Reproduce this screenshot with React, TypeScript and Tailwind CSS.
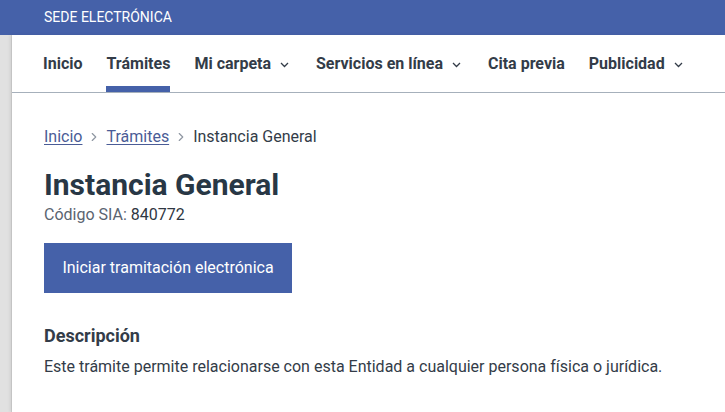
import { ChevronRight } from "lucide-react";

const font = { fontFamily: "Roboto, 'Liberation Sans', sans-serif" };

function Caret() {
  return (
    <svg width="9" height="6" viewBox="0 0 9 6" className="ml-[9px] mr-[3px] mt-[2px]" fill="none">
      <path d="M1 1l3.5 3.5L8 1" stroke="#333c48" strokeWidth="1.3" />
    </svg>
  );
}

type NavItem = { label: string; menu?: boolean; active?: boolean };

const nav: NavItem[] = [
  { label: "Inicio" },
  { label: "Trámites", active: true },
  { label: "Mi carpeta", menu: true },
  { label: "Servicios en línea", menu: true },
  { label: "Cita previa" },
  { label: "Publicidad", menu: true },
];

export default function App() {
  return (
    <div className="w-[725px] h-[412px] overflow-hidden flex flex-col bg-white" style={font}>
      <header className="h-[35px] shrink-0 bg-[#4561a9] flex items-center pl-[44px] text-[14px] text-white">
        SEDE ELECTRÓNICA
      </header>
      <div className="flex flex-1">
        <div className="w-[12px] shrink-0 bg-[#e1e1e1] border-r border-[#d2d2d2]" />
        <main className="flex-1 flex flex-col shadow-[-2px_0_3px_rgba(0,0,0,0.08)]">
          <nav className="h-[58px] border-b border-[#a6b0bb] flex items-center gap-[24px] pl-[31px]">
            {nav.map((item) => (
              <div
                key={item.label}
                className="relative h-full flex items-center text-[16px] font-bold text-[#333c48]"
              >
                {item.label}
                {item.menu && <Caret />}
                {item.active && (
                  <span className="absolute left-0 right-0 bottom-0 h-[6px] bg-[#4561a9]" />
                )}
              </div>
            ))}
          </nav>
          <div className="pl-[32px] pt-[34px]">
            <div className="flex items-center text-[16px] leading-[20px] text-[#333c48]">
              <a className="text-[#4a5c96] underline underline-offset-[2px]">Inicio</a>
              <ChevronRight size={14} strokeWidth={2} className="mx-[5px] text-[#8f97a2]" />
              <a className="text-[#4a5c96] underline underline-offset-[2px]">Trámites</a>
              <ChevronRight size={14} strokeWidth={2} className="mx-[5px] text-[#8f97a2]" />
              <span>Instancia General</span>
            </div>
            <h1 className="mt-[20px] text-[30px] leading-[36px] font-bold text-[#283745]">
              Instancia General
            </h1>
            <p className="mt-[2px] text-[16px] leading-[20px] text-[#5a6470]">
              Código SIA: <span className="text-[#2f3742]">840772</span>
            </p>
            <button className="mt-[18px] w-[248px] h-[50px] bg-[#4561a9] text-[16px] text-white">
              Iniciar tramitación electrónica
            </button>
            <h2 className="mt-[32px] text-[18px] leading-[22px] font-bold text-[#333c48]">
              Descripción
            </h2>
            <p className="mt-[9px] text-[16px] leading-[22px] text-[#333c48]">
              Este trámite permite relacionarse con esta Entidad a cualquier persona física o jurídica.
            </p>
          </div>
        </main>
      </div>
    </div>
  );
}
